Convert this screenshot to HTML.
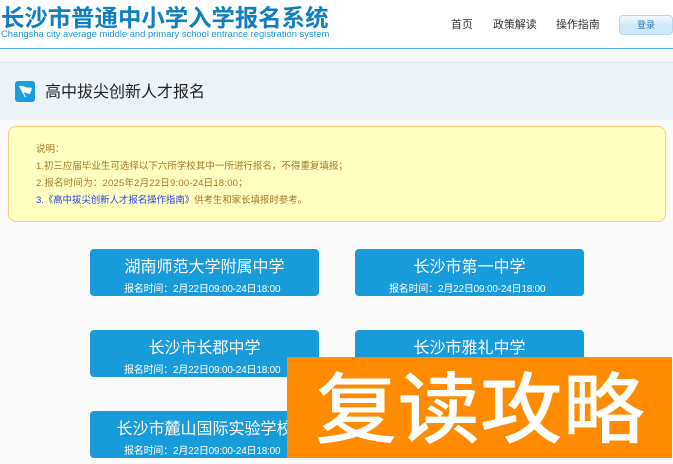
<!DOCTYPE html>
<html lang="zh">
<head>
<meta charset="utf-8">
<style>
html,body{margin:0;padding:0;overflow:hidden;}
body{width:673px;height:464px;overflow:hidden;position:relative;background:#fafafa;font-family:"Liberation Sans","Noto Sans CJK SC",sans-serif;}
.a{position:absolute;white-space:nowrap;}
.btn{position:absolute;width:229px;height:47px;background:#189bdb;border-radius:4px;color:#fff;text-align:center;overflow:hidden;}
.btn .t{position:absolute;left:0;right:0;top:9px;font-size:16px;line-height:20px;}
.btn .s{position:absolute;left:34px;top:34px;font-size:10px;line-height:14px;text-align:left;letter-spacing:-.2px;white-space:nowrap;}
.nav{font-size:11px;color:#333;line-height:14px;top:18px;letter-spacing:-.1px;}
.n{font-size:9.5px;line-height:14px;color:#a5762a;left:36px;}
</style>
</head>
<body>
<div class="a" style="left:0;top:0;width:673px;height:48px;background:#fff;"></div>
<div class="a" style="left:0;top:48px;width:673px;height:1px;background:#5aaee3;"></div>
<div class="a" style="left:1px;top:3px;font-size:23.4px;line-height:30px;font-weight:bold;color:#0f7fc2;">长沙市普通中小学入学报名系统</div>
<div class="a" style="left:1px;top:28px;font-size:9.4px;line-height:12px;color:#1a96dc;">Changsha city average middle and primary school entrance registration system</div>
<div class="a nav" style="left:451px;">首页</div>
<div class="a nav" style="left:493px;">政策解读</div>
<div class="a nav" style="left:556px;">操作指南</div>
<div class="a" style="left:619px;top:15px;width:52px;height:18px;border:1px solid #b5d8ee;border-radius:4px;background:linear-gradient(#f4f9fd,#cfe8fa 55%,#cfe8fa);color:#2a78b5;font-size:9px;line-height:18px;text-align:center;">登录</div>

<div class="a" style="left:0;top:62px;width:673px;height:58px;background:#edf4f9;border-top:1px solid #e3e8ec;box-sizing:border-box;"></div>
<svg class="a" style="left:15px;top:81px;" width="20" height="21" viewBox="0 0 20 21">
<rect width="20" height="21" rx="3" fill="#1a9ddd"/>
<path d="M4.5 5 L10.5 16" stroke="#fff" stroke-width="1.2" fill="none"/>
<path d="M5 5 C8 4 10 6.5 12.5 6.5 C14.5 6.5 15.5 6.5 17 7 L15 13 C12.5 13 10.5 11 8 11.5 Z" fill="#fff"/>
</svg>
<div class="a" style="left:45px;top:82px;font-size:16px;line-height:22px;color:#222;">高中拔尖创新人才报名</div>

<div class="a" style="left:8px;top:126px;width:658px;height:96px;box-sizing:border-box;background:#ffffc2;border:1px solid #f5d27a;border-radius:8px;"></div>
<div class="a n" style="top:143px;">说明：</div>
<div class="a n" style="top:160px;">1.初三应届毕业生可选择以下六所学校其中一所进行报名，不得重复填报；</div>
<div class="a n" style="top:177px;letter-spacing:.2px;">2.报名时间为：2025年2月22日9:00-24日18:00；</div>
<div class="a n" style="top:194px;letter-spacing:-.1px;"><span style="color:#2a3fe0;">3.《高中拔尖创新人才报名操作指南》</span>供考生和家长填报时参考。</div>

<div class="btn" style="left:90px;top:249px;"><div class="t">湖南师范大学附属中学</div><div class="s">报名时间：2月22日09:00-24日18:00</div></div>
<div class="btn" style="left:355px;top:249px;"><div class="t">长沙市第一中学</div><div class="s">报名时间：2月22日09:00-24日18:00</div></div>
<div class="btn" style="left:90px;top:330px;"><div class="t">长沙市长郡中学</div><div class="s">报名时间：2月22日09:00-24日18:00</div></div>
<div class="btn" style="left:355px;top:330px;"><div class="t">长沙市雅礼中学</div><div class="s">报名时间：2月22日09:00-24日18:00</div></div>
<div class="btn" style="left:90px;top:411px;"><div class="t">长沙市麓山国际实验学校</div><div class="s">报名时间：2月22日09:00-24日18:00</div></div>

<div class="a" style="left:287px;top:357px;width:385px;height:101px;background:#ff8c00;"></div>
<div class="a" style="left:315px;top:355px;font-size:82.5px;line-height:100px;color:#fff;font-family:'Noto Sans CJK SC',sans-serif;font-weight:500;transform:scaleY(.94);transform-origin:0 12px;">复读攻略</div>
</body>
</html>
